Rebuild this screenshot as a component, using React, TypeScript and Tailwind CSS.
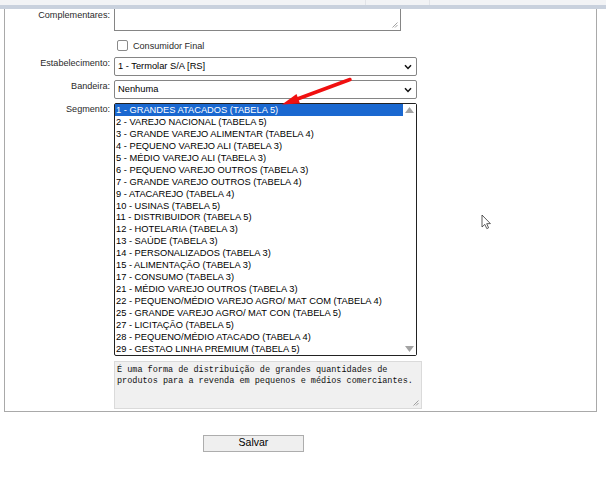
import React from "react";

const segmentos = [
  "1 - GRANDES ATACADOS (TABELA 5)",
  "2 - VAREJO NACIONAL (TABELA 5)",
  "3 - GRANDE VAREJO ALIMENTAR (TABELA 4)",
  "4 - PEQUENO VAREJO ALI (TABELA 3)",
  "5 - MÉDIO VAREJO ALI (TABELA 3)",
  "6 - PEQUENO VAREJO OUTROS (TABELA 3)",
  "7 - GRANDE VAREJO OUTROS (TABELA 4)",
  "9 - ATACAREJO (TABELA 4)",
  "10 - USINAS (TABELA 5)",
  "11 - DISTRIBUIDOR (TABELA 5)",
  "12 - HOTELARIA (TABELA 3)",
  "13 - SAÚDE (TABELA 3)",
  "14 - PERSONALIZADOS (TABELA 3)",
  "15 - ALIMENTAÇÃO (TABELA 3)",
  "17 - CONSUMO (TABELA 3)",
  "21 - MÉDIO VAREJO OUTROS (TABELA 3)",
  "22 - PEQUENO/MÉDIO VAREJO AGRO/ MAT COM (TABELA 4)",
  "25 - GRANDE VAREJO AGRO/ MAT CON (TABELA 5)",
  "27 - LICITAÇÃO (TABELA 5)",
  "28 - PEQUENO/MÉDIO ATACADO (TABELA 4)",
  "29 - GESTAO LINHA PREMIUM (TABELA 5)",
];

function Chevron() {
  return (
    <svg width="8" height="6" viewBox="0 0 8 6" className="shrink-0">
      <path d="M1 1.2 L4 4.4 L7 1.2" fill="none" stroke="#111" strokeWidth="1.5" />
    </svg>
  );
}

function Grip() {
  return (
    <svg width="6" height="6" viewBox="0 0 6 6" className="absolute right-[2px] bottom-[2px]">
      <path d="M5.5 0.5 L0.5 5.5 M5.5 3 L3 5.5" stroke="#8a8a8a" strokeWidth="0.8" />
    </svg>
  );
}

function Select({ value }: { value: string }) {
  return (
    <div className="w-[303px] h-[19px] border border-[#858585] rounded-[2px] bg-white flex items-center justify-between pl-[3px] pr-[4px] text-[9.3px] text-black">
      <span>{value}</span>
      <Chevron />
    </div>
  );
}

function Label({ children }: { children: React.ReactNode }) {
  return <div className="text-right text-[9.1px] leading-[11px] text-[#2a2a2a] pt-[1px]">{children}</div>;
}

export default function App() {
  return (
    <div className="relative w-[606px] h-[480px] bg-white overflow-hidden" style={{ fontFamily: '"Liberation Sans", Arial, sans-serif' }}>
      <div className="h-[5px] bg-[#f2f3f5] flex">
        <div className="w-[366px] border-r border-[#e2e4e8]" />
        <div className="w-[64px] border-r border-[#e2e4e8]" />
      </div>
      <div className="h-[4px] bg-[#c9d1dd]" />

      <div className="ml-[4px] w-[593px] border-x border-b border-[#a9a9a9] pb-[2px]">
        <div className="grid grid-cols-[105px_1fr] gap-x-[4px]">
          <Label>Complementares:</Label>
          <div className="relative w-[287px] h-[22px] border-x border-b border-[#858585] bg-white">
            <Grip />
          </div>

          <div />
          <div className="mt-[8px] h-[12px] flex items-center gap-[5px] pl-[3px]">
            <div className="w-[11px] h-[11px] border border-[#8a8a8a] rounded-[2px] bg-white" />
            <span className="text-[9.1px] text-[#2a2a2a] mt-[3px]">Consumidor Final</span>
          </div>

          <div className="mt-[6px]">
            <Label>Estabelecimento:</Label>
          </div>
          <div className="mt-[6px]">
            <Select value="1 - Termolar S/A [RS]" />
          </div>

          <div className="mt-[4px]">
            <Label>Bandeira:</Label>
          </div>
          <div className="mt-[4px]">
            <Select value="Nenhuma" />
          </div>

          <div className="mt-[4px]">
            <Label>Segmento:</Label>
          </div>
          <div className="mt-[4px] w-[303px] border border-[#222] rounded-[2px] bg-white flex">
            <div className="flex-1 flex flex-col">
              {segmentos.map((s, i) => (
                <div
                  key={s}
                  className={`h-[11.95px] leading-[12px] pl-[1px] text-[9.3px] whitespace-nowrap ${
                    i === 0 ? "bg-[#1a68d0] text-white" : "text-black"
                  }`}
                >
                  {s}
                </div>
              ))}
            </div>
            <div className="w-[13px] flex flex-col justify-between items-center py-[3px] bg-white">
              <svg width="9" height="6" viewBox="0 0 9 6">
                <path d="M0 6 L4.5 0 L9 6 Z" fill="#a3a3a3" />
              </svg>
              <svg width="9" height="6" viewBox="0 0 9 6">
                <path d="M0 0 L4.5 6 L9 0 Z" fill="#a3a3a3" />
              </svg>
            </div>
          </div>

          <div />
          <div className="mt-[5px] relative w-[308px] h-[48px] bg-[#f0f0f0] border border-[#dadada] pl-[2px] pt-[3px]">
            <p className="text-[8.5px] leading-[11px] text-[#111]" style={{ fontFamily: '"Liberation Mono", "Courier New", monospace' }}>
              É uma forma de distribuição de grandes quantidades de
              <br />
              produtos para a revenda em pequenos e médios comerciantes.
            </p>
            <Grip />
          </div>
        </div>
      </div>

      <div className="mt-[23px] ml-[203px] w-[101px] h-[17px] bg-[#efefef] border border-[#adadad] flex items-center justify-center text-[10.5px] text-black">
        Salvar
      </div>

      <svg className="absolute left-0 top-0 pointer-events-none" width="606" height="480">
        <path d="M350 79.5 L296 99.5" stroke="#f01010" strokeWidth="3.5" strokeLinecap="round" />
        <path d="M282 104.5 L296.5 94 L300 103.5 Z" fill="#f01010" />
        <path
          d="M482 215 L482 227 L484.8 224.4 L486.8 228.6 L488.6 227.8 L486.7 223.7 L490.4 223.6 Z"
          fill="#fff"
          stroke="#333"
          strokeWidth="0.8"
          strokeLinejoin="round"
        />
      </svg>
    </div>
  );
}
